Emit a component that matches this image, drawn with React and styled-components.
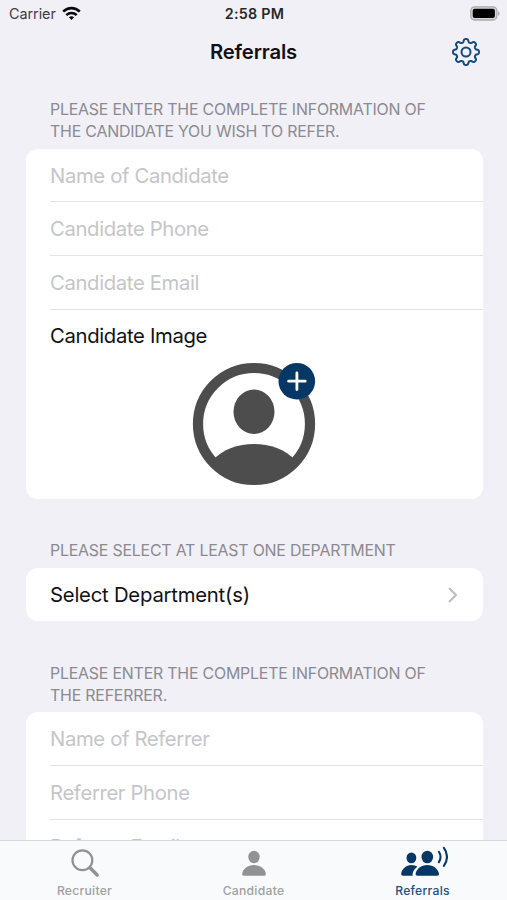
import React from "react";
import styled, { createGlobalStyle } from "styled-components";

const GlobalStyle = createGlobalStyle`
  * { box-sizing: border-box; }
  body {
    margin: 0;
    background: #f1f0f6;
    font-family: Inter, "Liberation Sans", sans-serif;
    overflow: hidden;
  }
`;

const navy = "#073765";

const Screen = styled.div`
  display: flex;
  flex-direction: column;
  width: 507px;
  height: 900px;
  overflow: hidden;
  background: #f1f0f6;
`;

const Text = styled.span`
  display: block;
  white-space: nowrap;
  font-size: ${(p) => p.$size}px;
  line-height: ${(p) => p.$line}px;
  font-weight: ${(p) => p.$weight || 400};
  letter-spacing: ${(p) => p.$track || 0}px;
  color: ${(p) => p.$color || "#111113"};
`;

const StatusBar = styled.header`
  display: grid;
  grid-template-columns: 1fr auto 1fr;
  align-items: center;
  height: 28px;
  padding: 0 7px 0 9px;
  flex: none;
`;

const Carrier = styled.div`
  display: flex;
  align-items: center;
  gap: 6px;

  svg {
    margin-bottom: 2px;
  }
`;

const BatterySlot = styled.div`
  display: flex;
  justify-content: flex-end;
  padding-bottom: 1px;
`;

const NavBar = styled.nav`
  display: grid;
  grid-template-columns: 1fr auto 1fr;
  align-items: center;
  height: 48px;
  padding: 0 26px;
  flex: none;
`;

const NavAction = styled.button`
  grid-column: 3;
  justify-self: end;
  display: flex;
  padding: 0;
  border: 0;
  background: none;
`;

const NavTitle = styled.div`
  grid-column: 2;
`;

const Form = styled.main`
  flex: 1;
  min-height: 0;
  overflow: hidden;
  padding: 0 24.5px 0 25.5px;
`;

const SectionLabel = styled.div`
  padding: ${(p) => p.$top}px 0 5.5px 24.5px;
`;

const Card = styled.section`
  background: #fff;
  border-radius: 12px;
  padding-left: 24.5px;
  height: ${(p) => p.$height}px;
`;

const Row = styled.div`
  display: flex;
  align-items: center;
  justify-content: space-between;
  height: 53.75px;
  padding-top: 1.5px;
  padding-right: ${(p) => (p.$link ? 25 : 0)}px;
  border-bottom: ${(p) => (p.$link ? "0" : "1px solid #e3e3e6")};
`;

const ImageRow = styled.div`
  display: flex;
  flex-direction: column;
  padding-top: 13px;
`;

const AvatarButton = styled.button`
  align-self: center;
  display: flex;
  margin: 13px 24.5px 0 0;
  padding: 0;
  border: 0;
  background: none;
`;

const TabBar = styled.footer`
  display: grid;
  grid-template-columns: repeat(3, 1fr);
  height: 60px;
  flex: none;
  background: #f9fafb;
  border-top: 1px solid #d8d8db;
`;

const Tab = styled.div`
  display: flex;
  flex-direction: column;
  align-items: center;
  gap: 1px;
  padding-top: 3px;
`;

function WifiIcon() {
  return (
    <svg width="19" height="15" viewBox="0 0 19 15" fill="none" stroke="#0b0b0d" strokeWidth="2.6">
      <path d="M1.2 5.7C6 .9 13 .9 17.8 5.7" />
      <path d="M4.3 9.1c3-2.8 7.4-2.8 10.4 0" />
      <path d="M9.5 13.9 6.9 11.3c1.5-1.4 3.7-1.4 5.2 0z" fill="#0b0b0d" stroke="none" />
    </svg>
  );
}

function BatteryIcon() {
  return (
    <svg width="30" height="15" viewBox="0 0 30 15">
      <rect x=".8" y=".8" width="26" height="13.2" rx="3.8" fill="#d6d5d8" stroke="#aaa9ad" strokeWidth="1.3" />
      <rect x="2.7" y="2.7" width="22.2" height="9.4" rx="2" fill="#000" />
      <path d="M28.1 5c2 .8 2 4 0 4.8z" fill="#aaa9ad" />
    </svg>
  );
}

const gearPath = (() => {
  const points = [];
  for (let i = 0; i < 160; i++) {
    const a = (i / 160) * Math.PI * 2;
    const r = 11.4 + 1.6 * Math.tanh(1.9 * Math.cos(8 * a) + 0.15);
    points.push(`${(15 + r * Math.cos(a)).toFixed(2)} ${(15 + r * Math.sin(a)).toFixed(2)}`);
  }
  return `M${points.join("L")}Z`;
})();

function GearIcon() {
  return (
    <svg width="30" height="30" viewBox="0 0 30 30" fill="none" stroke="#174a79" strokeWidth="2" strokeLinejoin="round">
      <path d={gearPath} />
      <circle cx="15" cy="15" r="4.5" />
    </svg>
  );
}

function AvatarIcon() {
  return (
    <svg width="124" height="124" viewBox="0 0 124 124">
      <defs>
        <clipPath id="avatar-disc">
          <circle cx="62" cy="62" r="57" />
        </clipPath>
      </defs>
      <circle cx="62" cy="62" r="56" fill="none" stroke="#4d4d4d" strokeWidth="10.2" />
      <ellipse cx="62" cy="49.8" rx="20.5" ry="22.2" fill="#4d4d4d" />
      <path d="M20 99C31 87 46 82 62 82s31 5 42 17v25H20z" fill="#4d4d4d" clipPath="url(#avatar-disc)" />
      <circle cx="104.8" cy="19.2" r="18.3" fill={navy} />
      <path d="M96.6 19.2h16.6M104.9 10.9v16.6" stroke="#fff" strokeWidth="2.8" strokeLinecap="round" />
    </svg>
  );
}

function ChevronIcon() {
  return (
    <svg width="10" height="16" viewBox="0 0 10 16" fill="none" stroke="#bdbdc0" strokeWidth="2.2" strokeLinecap="round" strokeLinejoin="round">
      <path d="M1.7 1.7 8 8l-6.3 6.3" />
    </svg>
  );
}

function SearchIcon() {
  return (
    <svg width="50" height="38" viewBox="0 0 50 38" fill="none" stroke="#929294">
      <circle cx="22.4" cy="16.2" r="9.9" strokeWidth="2.3" />
      <path d="m30 23.8 7.2 7.2" strokeWidth="3.4" strokeLinecap="round" />
    </svg>
  );
}

function PersonIcon() {
  return (
    <svg width="50" height="38" viewBox="0 0 50 38" fill="#929294">
      <ellipse cx="25" cy="13" rx="5.7" ry="6.2" />
      <path d="M15.2 31.8c-1.5 0-2.1-.8-2-2C13.7 25.1 19 21.1 25 21.1s11.3 4 11.8 8.7c.1 1.2-.5 2-2 2z" />
    </svg>
  );
}

function ReferralsIcon() {
  return (
    <svg width="50" height="38" viewBox="0 0 50 38" fill={navy}>
      <ellipse cx="13.4" cy="13.9" rx="4.9" ry="5.4" />
      <path d="M5.2 31.8c-1.5 0-2.1-.7-2-2 .5-4.6 4.9-8.8 10.2-8.8 2.5 0 4.5.8 6 1.7-2.6 1.7-4.4 4.2-4.8 7-.1.8 0 1.5.3 2.1z" />
      <ellipse cx="29.3" cy="13" rx="5.8" ry="6.3" />
      <path d="M19.6 31.8c-1.5 0-2.2-.8-2-2 .7-4.8 5.6-8.8 11.7-8.8s11 4 11.7 8.8c.2 1.2-.5 2-2 2z" />
      <path d="M40.9 7.8c1.9 3 1.9 7.3 0 10.3M45.9 3.8c4.1 5.4 4.1 12.7 0 18.1" fill="none" stroke={navy} strokeWidth="2.1" strokeLinecap="round" />
    </svg>
  );
}

function Label({ top, lines }) {
  return (
    <SectionLabel $top={top}>
      {lines.map((text) => (
        <Text key={text} $size={15.9} $line={22} $track={-0.2} $color="#8b8a90">{text}</Text>
      ))}
    </SectionLabel>
  );
}

function Field({ children }) {
  return (
    <Row>
      <Text $size={20.3} $line={26} $track={-0.36} $color="#c5c5c8">{children}</Text>
    </Row>
  );
}

function TabItem({ icon, label, color }) {
  return (
    <Tab>
      {icon}
      <Text $size={12.2} $line={16} $weight={500} $track={0.25} $color={color}>{label}</Text>
    </Tab>
  );
}

export default function App() {
  return (
    <>
      <GlobalStyle />
      <Screen>
        <StatusBar>
          <Carrier>
            <Text $size={14.4} $line={18} $track={-0.05} $color="#3d3d41">Carrier</Text>
            <WifiIcon />
          </Carrier>
          <Text $size={14.3} $line={18} $weight={600} $track={0.25} $color="#28282b">2:58 PM</Text>
          <BatterySlot><BatteryIcon /></BatterySlot>
        </StatusBar>
        <NavBar>
          <NavTitle><Text $size={20.3} $line={26} $weight={600} $track={-0.15}>Referrals</Text></NavTitle>
          <NavAction aria-label="Settings"><GearIcon /></NavAction>
        </NavBar>
        <Form>
          <Label top={23} lines={["PLEASE ENTER THE COMPLETE INFORMATION OF", "THE CANDIDATE YOU WISH TO REFER."]} />
          <Card $height={350}>
            <Field>Name of Candidate</Field>
            <Field>Candidate Phone</Field>
            <Field>Candidate Email</Field>
            <ImageRow>
              <Text $size={20.3} $line={26} $track={-0.34}>Candidate Image</Text>
              <AvatarButton aria-label="Add image"><AvatarIcon /></AvatarButton>
            </ImageRow>
          </Card>
          <Label top={41.5} lines={["PLEASE SELECT AT LEAST ONE DEPARTMENT"]} />
          <Card $height={53.75}>
            <Row $link>
              <Text $size={20.3} $line={26} $track={-0.22}>Select Department(s)</Text>
              <ChevronIcon />
            </Row>
          </Card>
          <Label top={41.5} lines={["PLEASE ENTER THE COMPLETE INFORMATION OF", "THE REFERRER."]} />
          <Card $height={215}>
            <Field>Name of Referrer</Field>
            <Field>Referrer Phone</Field>
            <Field>Referrer Email</Field>
          </Card>
        </Form>
        <TabBar>
          <TabItem icon={<SearchIcon />} label="Recruiter" color="#a0a0a3" />
          <TabItem icon={<PersonIcon />} label="Candidate" color="#a0a0a3" />
          <TabItem icon={<ReferralsIcon />} label="Referrals" color="#265079" />
        </TabBar>
      </Screen>
    </>
  );
}
